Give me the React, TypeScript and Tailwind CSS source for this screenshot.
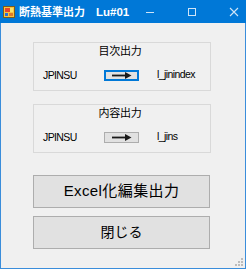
import React from "react";

const jp = "font-['Liberation_Sans','Noto_Sans_CJK_JP',sans-serif]";

function AppIcon() {
  return (
    <svg width="12" height="12" viewBox="0 0 12 12">
      <rect x="0.5" y="0.5" width="11" height="11" fill="#f4c542" stroke="#7a5a1c" />
      <rect x="2" y="2" width="5" height="4" fill="#e8442c" />
      <rect x="7" y="2" width="3" height="4" fill="#f7e36b" />
      <rect x="2" y="7" width="3" height="3" fill="#2a6fd6" />
      <rect x="6" y="7" width="4" height="3" fill="#e07a2a" />
    </svg>
  );
}

function Arrow() {
  return (
    <svg width="20" height="7" viewBox="0 0 20 7">
      <rect x="0" y="2.6" width="15" height="1.8" fill="#1a1a1a" />
      <path d="M13 0 L19.5 3.5 L13 7 Z" fill="#1a1a1a" />
    </svg>
  );
}

type GroupProps = {
  title: string;
  target: string;
  focused?: boolean;
};

function Group({ title, target, focused }: GroupProps) {
  return (
    <div className="h-[49px] w-[178px] border border-[#d9d9d9] pt-[1px]">
      <p className={`${jp} pr-[4px] text-center text-[11px] leading-[14px] tracking-[-0.3px]`}>{title}</p>
      <div className="mt-[11px] flex h-[12px] items-center pl-[9px]">
        <span className={`${jp} w-[61px] text-[10.5px] leading-[12px] tracking-[-0.6px]`}>JPINSU</span>
        <button
          type="button"
          className={
            focused
              ? "flex h-[11px] w-[35px] items-center justify-center border-2 border-[#0078d7] bg-[#e1e1e1]"
              : "flex h-[11px] w-[35px] items-center justify-center border border-[#adadad] bg-[#e1e1e1]"
          }
        >
          <Arrow />
        </button>
        <span className={`${jp} -mt-[3px] ml-[18px] text-[10.5px] leading-[12px] tracking-[-0.6px]`}>{target}</span>
      </div>
    </div>
  );
}

export default function App() {
  return (
    <div className="relative flex h-[269px] w-[246px] flex-col border border-t-0 border-[#3a8ddb] bg-[#f0f0f0] text-black">
      <div className="-mx-[1px] flex h-[23px] items-center whitespace-nowrap bg-[#0078d7] text-white">
        <div className="ml-[3px] flex w-[13px] shrink-0 items-center">
          <AppIcon />
        </div>
        <span className={`${jp} ml-[3px] text-[11px] font-bold leading-[14px]`}>断熱基準出力</span>
        <span className={`${jp} ml-[11px] text-[11.5px] font-bold leading-[14px]`}>Lu#01</span>
        <div className="ml-auto flex h-full shrink-0">
          <div className="flex w-[42px] items-center justify-center">
            <svg width="10" height="10" viewBox="0 0 10 10">
              <rect x="1" y="5" width="8" height="1" fill="#cfe4f7" />
            </svg>
          </div>
          <div className="flex w-[42px] items-center justify-center">
            <svg width="10" height="10" viewBox="0 0 10 10">
              <rect x="1.5" y="1.5" width="7" height="7" fill="none" stroke="#cfe4f7" />
            </svg>
          </div>
          <div className="flex w-[42px] items-center justify-center">
            <svg width="10" height="10" viewBox="0 0 10 10">
              <path d="M1 1 L9 9 M9 1 L1 9" stroke="#cfe4f7" strokeWidth="1.1" />
            </svg>
          </div>
        </div>
      </div>

      <div className="flex flex-col pl-[32px] pt-[19px]">
        <Group title="目次出力" target="l_jinindex" focused />
        <div className="mt-[13px]">
          <Group title="内容出力" target="l_jins" />
        </div>
        <button
          type="button"
          className={`${jp} mt-[22px] h-[33px] w-[177px] border border-[#adadad] bg-[#e1e1e1] text-[15px] tracking-[0.4px]`}
        >
          Excel化編集出力
        </button>
        <button
          type="button"
          className={`${jp} mt-[8px] h-[33px] w-[177px] border border-[#adadad] bg-[#e1e1e1] text-[14px]`}
        >
          閉じる
        </button>
      </div>

      <svg className="absolute bottom-[2px] right-[2px]" width="8" height="8" viewBox="0 0 8 8">
        <rect x="6" y="0" width="2" height="2" fill="#bcbcbc" />
        <rect x="3" y="3" width="2" height="2" fill="#bcbcbc" />
        <rect x="6" y="3" width="2" height="2" fill="#bcbcbc" />
        <rect x="0" y="6" width="2" height="2" fill="#bcbcbc" />
        <rect x="3" y="6" width="2" height="2" fill="#bcbcbc" />
        <rect x="6" y="6" width="2" height="2" fill="#bcbcbc" />
      </svg>
    </div>
  );
}
